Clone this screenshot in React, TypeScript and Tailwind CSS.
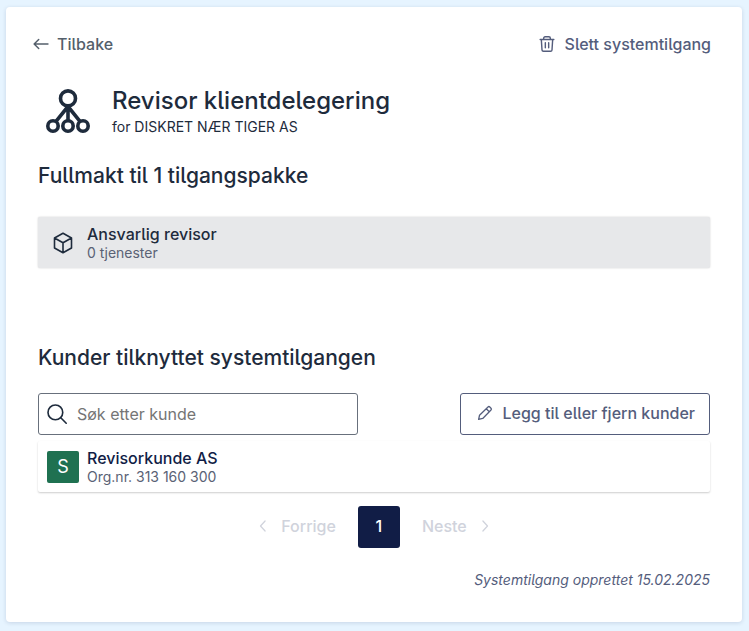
import type { ReactNode } from "react";

import { clsx } from "clsx";

type IconProps = {
  className?: string;
  strokeWidth?: number;
  children: ReactNode;
};

function Icon({ className, strokeWidth = 1.5, children }: IconProps) {
  return (
    <svg
      viewBox="0 0 24 24"
      fill="none"
      stroke="currentColor"
      strokeWidth={strokeWidth}
      strokeLinecap="round"
      strokeLinejoin="round"
      aria-hidden="true"
      className={clsx("shrink-0", className)}
    >
      {children}
    </svg>
  );
}

function SystemIcon() {
  return (
    <svg
      viewBox="0 0 44 44"
      fill="none"
      stroke="currentColor"
      strokeWidth={3.6}
      aria-hidden="true"
      className="size-11 shrink-0"
    >
      <circle cx="22" cy="9.4" r="7.5" />
      <circle cx="7" cy="37" r="5.2" />
      <circle cx="22" cy="37" r="5.2" />
      <circle cx="37" cy="37" r="5.2" />
      <path d="M22 17v15M22 17.5 9.8 32.6M22 17.5l12.2 15.1" />
    </svg>
  );
}

type ListRowProps = {
  media: ReactNode;
  title: string;
  description: string;
  className?: string;
};

function ListRow({ media, title, description, className }: ListRowProps) {
  return (
    <li className={clsx("flex items-center gap-2 rounded-xs px-[9px] py-1.5", className)}>
      <span className="flex size-8 shrink-0 items-center justify-center">{media}</span>
      <span className="min-w-0 pt-px">
        <span className="block text-base leading-5 font-medium">{title}</span>
        <span className="block text-sm leading-[18px] text-[#5a6275]">{description}</span>
      </span>
    </li>
  );
}

export default function App() {
  return (
    <div className="bg-[#e6f4ff] px-1.5 pt-[7px] pb-[9px] font-['Inter','Liberation_Sans',sans-serif] text-[#1e2b3c] [font-feature-settings:'cv05']">
      <main className="mr-px rounded-sm bg-white px-8 pt-[23px] pb-8 shadow-[0_1px_4px_rgba(0,30,80,0.14)]">
        <div className="-mr-px flex items-center justify-between">
          <a
            href="#tilbake"
            className="-ml-2 flex items-center gap-[5px] text-base leading-7 font-medium text-[#545f6b]"
          >
            <Icon className="size-[22px]" strokeWidth={1.6}>
              <path d="M19.600 12H4.800M9.500 7 4.500 12l5 5" />
            </Icon>
            Tilbake
          </a>
          <button
            type="button"
            className="flex items-center gap-2 text-base leading-7 font-medium text-[#545d7c]"
          >
            <Icon className="size-5" strokeWidth={1.7}>
              <path d="M3.800 6.500h16.400M8 6.300V5a1.700 1.700 0 0 1 1.700-1.700h4.600A1.700 1.700 0 0 1 16 5v1.300M5.200 6.800l.8 12.300a1.700 1.700 0 0 0 1.700 1.600h8.600a1.700 1.700 0 0 0 1.700-1.600l.8-12.300M10 10.500v6M14 10.500v6" />
            </Icon>
            Slett systemtilgang
          </button>
        </div>

        <header className="mt-6 flex items-center gap-[22px] pt-[3px] pl-2">
          <SystemIcon />
          <div className="flex flex-col">
            <h1 className="text-2xl leading-8 font-medium">Revisor klientdelegering</h1>
            <p className="text-sm leading-5">for DISKRET NÆR TIGER AS</p>
          </div>
        </header>

        <section className="mt-[25px]">
          <h2 className="text-[21px] leading-7 font-medium">Fullmakt til 1 tilgangspakke</h2>
          <ul className="mt-[27px]">
            <ListRow
              className="bg-[#e7e8ea] shadow-[0_0_2px_rgba(0,0,0,0.2)]"
              media={
                <Icon className="size-6" strokeWidth={1.6}>
                  <path d="M12 2.200 20.500 7v10L12 21.800 3.500 17V7ZM3.500 7l8.500 4.800L20.500 7M12 11.800v10" />
                </Icon>
              }
              title="Ansvarlig revisor"
              description="0 tjenester"
            />
          </ul>
        </section>

        <section className="mt-[76px]">
          <h2 className="text-[21px] leading-7 font-medium">Kunder tilknyttet systemtilgangen</h2>
          <div className="mt-[21px] flex items-center justify-between gap-4">
            <div className="relative w-80">
              <Icon className="pointer-events-none absolute top-2 left-1.5 size-[26px]">
                <circle cx="10.5" cy="10.5" r="6.8" />
                <path d="m15.500 15.500 5 5" />
              </Icon>
              <input
                type="search"
                aria-label="Søk etter kunde"
                placeholder="Søk etter kunde"
                className="block h-[42px] w-full rounded-[3px] border border-[#68707c] pr-3 pl-[38px] text-base placeholder:text-[#757575]"
              />
            </div>
            <button
              type="button"
              className="flex h-[42px] shrink-0 items-center gap-2 rounded-[3px] border border-[#545d7c] pr-3.5 pb-0.5 pl-[15px] text-base font-medium text-[#545d7c]"
            >
              <Icon className="size-[18px]" strokeWidth={1.7}>
                <path d="m3.500 20.500 1.200-5.500L16 4a1.700 1.700 0 0 1 2.400 0L20 5.600a1.700 1.700 0 0 1 0 2.400L9 19.300ZM13.700 6.300l4 4" />
              </Icon>
              Legg til eller fjern kunder
            </button>
          </div>
          <ul className="mt-1.5">
            <ListRow
              className="text-[#111d46] shadow-[0_1px_2px_rgba(0,0,0,0.2)]"
              media={
                <span className="flex size-8 items-center justify-center rounded-xs bg-[#1f7151] text-lg text-white">
                  S
                </span>
              }
              title="Revisorkunde AS"
              description="Org.nr. 313 160 300"
            />
          </ul>
          <nav
            aria-label="Paginering"
            className="mt-3.5 flex items-center justify-center text-base font-medium text-[#d0d3dc]"
          >
            <button
              type="button"
              disabled
              className="flex h-[42px] items-center gap-2 pr-[22px] pb-0.5"
            >
              <Icon className="size-5">
                <path d="m14.500 6-5.500 6 5.500 6" />
              </Icon>
              Forrige
            </button>
            <button
              type="button"
              aria-current="page"
              className="size-[42px] rounded-[3px] bg-[#111d46] pb-0.5 text-white"
            >
              1
            </button>
            <button
              type="button"
              disabled
              className="flex h-[42px] items-center gap-2 pb-0.5 pl-[22px]"
            >
              Neste
              <Icon className="size-5">
                <path d="m9.500 6 5.500 6-5.500 6" />
              </Icon>
            </button>
          </nav>
        </section>

        <p className="mt-[22px] text-right text-sm leading-5 text-[#545d7c] italic">
          Systemtilgang opprettet 15.02.2025
        </p>
      </main>
    </div>
  );
}
